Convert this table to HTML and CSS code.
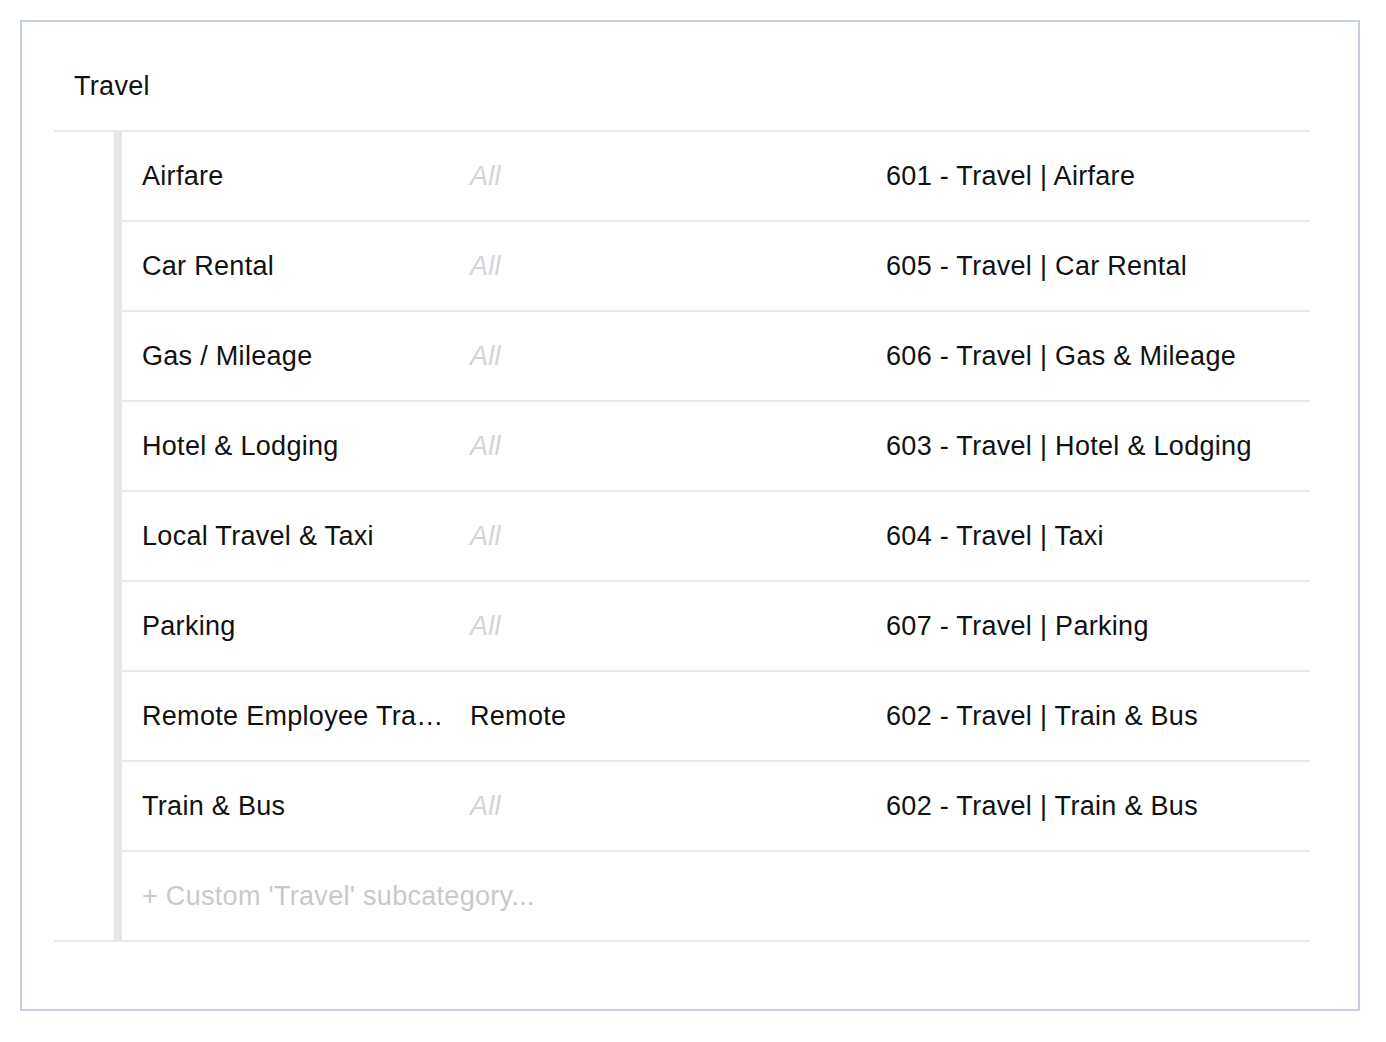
FILE: index.html
```html
<!DOCTYPE html>
<html lang="en">
<head>
<meta charset="utf-8">
<title>Travel</title>
<link rel="stylesheet" href="styles.css">
</head>
<body>
<div class="card">
  <div class="cat-header">Travel</div>
  <div class="group">
    <div class="indent"></div>
    <div class="bar"></div>
    <div class="rows">
      <div class="row"><div class="c-name">Airfare</div><div class="c-scope all">All</div><div class="c-acct">601 - Travel | Airfare</div></div>
      <div class="row"><div class="c-name">Car Rental</div><div class="c-scope all">All</div><div class="c-acct">605 - Travel | Car Rental</div></div>
      <div class="row"><div class="c-name">Gas / Mileage</div><div class="c-scope all">All</div><div class="c-acct">606 - Travel | Gas &amp; Mileage</div></div>
      <div class="row"><div class="c-name">Hotel &amp; Lodging</div><div class="c-scope all">All</div><div class="c-acct">603 - Travel | Hotel &amp; Lodging</div></div>
      <div class="row"><div class="c-name">Local Travel &amp; Taxi</div><div class="c-scope all">All</div><div class="c-acct">604 - Travel | Taxi</div></div>
      <div class="row"><div class="c-name">Parking</div><div class="c-scope all">All</div><div class="c-acct">607 - Travel | Parking</div></div>
      <div class="row"><div class="c-name">Remote Employee Travel</div><div class="c-scope">Remote</div><div class="c-acct">602 - Travel | Train &amp; Bus</div></div>
      <div class="row"><div class="c-name">Train &amp; Bus</div><div class="c-scope all">All</div><div class="c-acct">602 - Travel | Train &amp; Bus</div></div>
      <div class="row row-add"><div class="c-add">+ Custom 'Travel' subcategory...</div></div>
    </div>
  </div>
</div>
</body>
</html>
```
FILE: styles.css
```css
html, body {
  margin: 0;
  padding: 0;
  background: #ffffff;
}
body {
  font-family: "Liberation Sans", Arial, Helvetica, sans-serif;
  font-size: 27px;
  letter-spacing: 0.3px;
  color: #111111;
}
.card {
  box-sizing: border-box;
  width: 1340px;
  margin: 20px 0 0 20px;
  border: 2px solid #c5cfdd;
  padding: 0 48px 67px 32px;
}
.cat-header {
  line-height: 27px;
  padding: 51px 20px 30px 20px;
  border-bottom: 2px solid #e8e8e8;
}
.group {
  display: flex;
  border-bottom: 2px solid #e8e8e8;
}
.indent {
  width: 60px;
  flex: none;
}
.bar {
  width: 8px;
  flex: none;
  background: #e6e6e6;
}
.rows {
  flex: 1;
  min-width: 0;
}
.row {
  display: flex;
  align-items: center;
  height: 88px;
  line-height: 34px;
  border-bottom: 2px solid #e8e8e8;
}
.row-add {
  border-bottom: none;
}
.c-name {
  box-sizing: border-box;
  width: 328px;
  flex: none;
  padding-left: 20px;
  white-space: nowrap;
  overflow: hidden;
  text-overflow: ellipsis;
}
.c-scope {
  box-sizing: border-box;
  width: 416px;
  flex: none;
  padding-left: 20px;
}
.c-scope.all {
  font-style: italic;
  color: #d3d4d8;
}
.c-acct {
  flex: 1;
  padding-left: 20px;
  white-space: nowrap;
}
.c-add {
  padding-left: 20px;
  color: #c9c9c9;
}
```
